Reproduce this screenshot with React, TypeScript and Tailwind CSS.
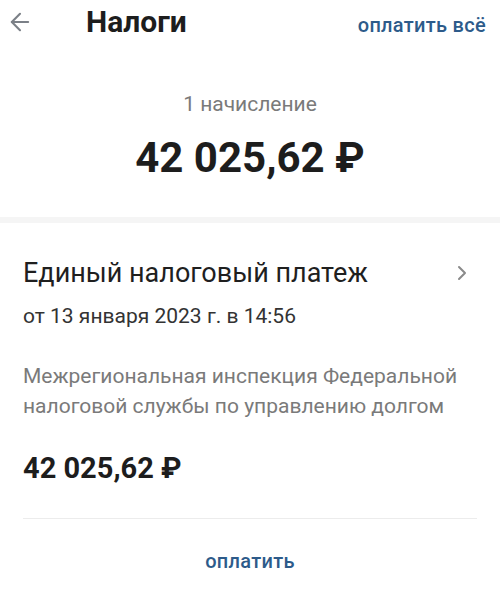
import { ArrowLeft, ChevronRight } from 'lucide-react';

const font = { fontFamily: 'Roboto, "Noto Sans", sans-serif' };

export default function App() {
  return (
    <div className="flex h-[589px] w-[500px] flex-col bg-white text-[#222]" style={font}>
      <header className="flex h-[44px] items-center pl-[6px] pr-[14px]">
        <ArrowLeft className="h-[28px] w-[28px] text-[#7b8087]" strokeWidth={1.8} />
        <h1 className="ml-[52px] text-[30px] font-bold leading-[36px] text-[#1d1d1d]">Налоги</h1>
        <button className="ml-auto pt-[6px] text-[20px] font-medium leading-[28px] tracking-[0.3px] text-[#2d5b8a]">оплатить всё</button>
      </header>

      <section className="flex flex-col items-center pt-[46px]">
        <p className="text-[21px] leading-[28px] text-[#7a7a7a]">1 начисление</p>
        <p className="mt-[15px] text-[42px] font-bold leading-[50px] text-[#1d1d1d]">42 025,62 ₽</p>
      </section>

      <div className="mt-[34px] h-[6px] bg-[#f5f5f5]" />

      <section className="flex flex-1 flex-col rounded-t-[10px] bg-white px-[23px] pt-[33px]">
        <div className="flex items-center justify-between">
          <h2 className="text-[27px] leading-[34px] text-[#1f1f1f]">Единый налоговый платеж</h2>
          <ChevronRight className="mr-[3px] h-[24px] w-[24px] text-[#8a8a8a]" strokeWidth={2} />
        </div>
        <p className="mt-[12px] text-[21px] leading-[28px] text-[#333]">от 13 января 2023 г. в 14:56</p>
        <p className="mt-[31px] text-[21px] leading-[30px] text-[#7a7a7a]">
          Межрегиональная инспекция Федеральной налоговой службы по управлению долгом
        </p>
        <p className="mt-[29px] text-[29px] font-bold leading-[36px] text-[#1d1d1d]">42 025,62 ₽</p>
        <div className="mt-[32px] h-px bg-[#ececec]" />
        <button className="mt-[28px] self-center text-[20px] font-medium leading-[28px] tracking-[0.3px] text-[#2d5b8a]">оплатить</button>
      </section>
    </div>
  );
}
